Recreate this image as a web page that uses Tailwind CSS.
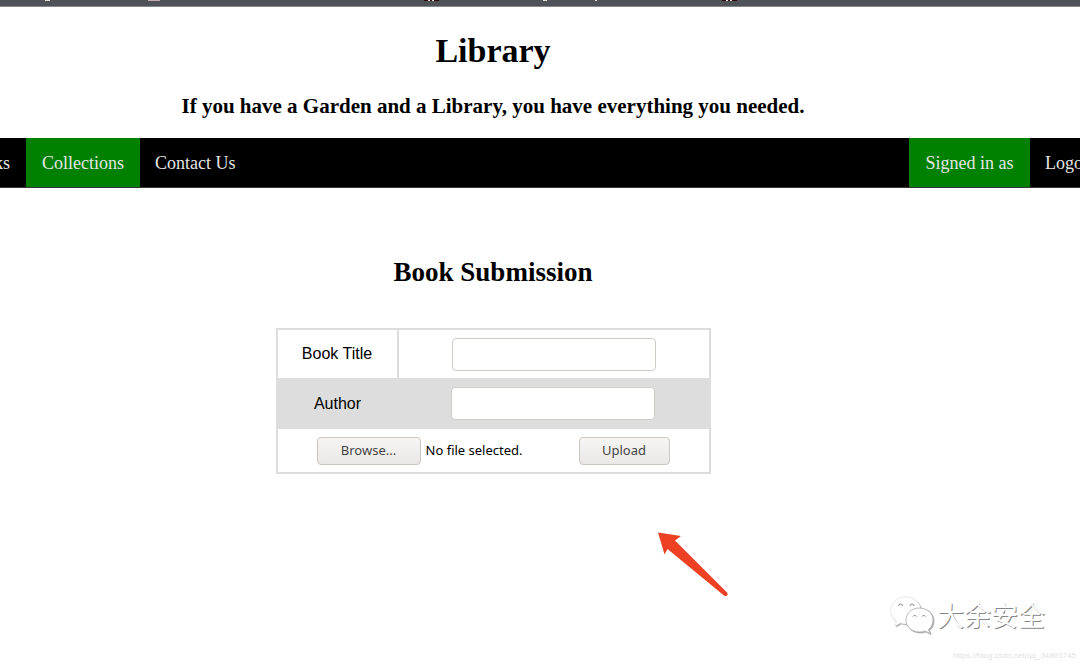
<!DOCTYPE html>
<html lang="en">
<head>
<meta charset="utf-8">
<title>Library</title>
<script src="https://cdn.jsdelivr.net/npm/@tailwindcss/browser@4"></script>
</head>
<body class="relative min-h-screen overflow-x-hidden bg-white font-['Liberation_Serif',serif] text-black">
  <div class="h-[7px] overflow-hidden border-b border-[#85878a] bg-[#4f5357]">
    <svg class="block h-[2px] w-[1080px]" viewBox="0 0 1080 2" aria-hidden="true">
      <path fill="#e3ded6" d="M45 0h5v1h-5zM543 0h4v1h-4zM595 0h2v1h-2z"/>
      <path fill="#c4abb0" d="M148 0h12v1h-12z"/>
      <path fill="#2a0508" d="M424 0h15v1h-15zM722 0h15v1h-15z"/>
      <path fill="#e8dada" d="M428 0h2v1h-2zM432 0h2v1h-2zM726 0h2v1h-2zM730 0h2v1h-2z"/>
    </svg>
  </div>
  <header class="pt-6 pr-[94px] pb-4 text-center font-bold">
    <h1 class="text-[34px] leading-[40px]">Library</h1>
    <h2 class="mt-5 text-[21px] leading-[31px]">If you have a Garden and a Library, you have everything you needed.</h2>
  </header>
  <nav class="flex h-[50px] justify-between overflow-hidden border-b border-[#333] bg-black text-[18px] leading-[51px] whitespace-nowrap text-[#e6e6e6]">
    <div class="flex">
      <a href="#" class="flex w-[26px] justify-end pr-4" aria-label="Books">ks</a>
      <a href="#" class="w-[114px] bg-[#008000] text-center">Collections</a>
      <a href="#" class="px-[15px]">Contact Us</a>
    </div>
    <div class="flex">
      <a href="#" class="w-[121px] bg-[#008000] text-center">Signed in as</a>
      <a href="#" class="w-[50px] overflow-hidden pl-[15px]">Logout</a>
    </div>
  </nav>
  <main class="flex flex-col items-center pt-[66px] pr-[94px]">
    <h2 class="text-[27px] leading-[36px] font-bold">Book Submission</h2>
    <form class="mt-[38px]" onsubmit="return false">
      <table class="w-[435px] table-fixed border-collapse border-2 border-[#ddd] font-['Liberation_Sans',sans-serif] text-base">
        <tr class="h-[49px]">
          <td class="w-[121px] border-r-2 border-[#ddd] text-center"><label for="title">Book Title</label></td>
          <td class="text-center"><input id="title" type="text" class="mx-auto block h-[33px] w-[204px] rounded border border-[#cfccc8] bg-white px-2"></td>
        </tr>
        <tr class="h-[51px] bg-[#ddd]">
          <td class="text-center"><label for="author">Author</label></td>
          <td class="text-center"><input id="author" type="text" class="mx-auto block h-[33px] w-[204px] rounded border border-[#cfccc8] bg-white px-2"></td>
        </tr>
        <tr class="h-[44px] font-['Noto_Sans',sans-serif] text-[13px]">
          <td colspan="2">
            <div class="flex items-center px-[39px]">
              <input id="file" type="file" class="hidden" aria-label="Book file">
              <button type="button" onclick="document.getElementById('file').click()" class="h-7 w-[104px] rounded border border-[#cdc7c2] bg-linear-to-b from-[#f6f5f4] to-[#eae8e6] text-[#444]">Browse...</button>
              <span class="ml-[5px] whitespace-nowrap">No file selected.</span>
              <button type="submit" class="ml-auto h-7 w-[91px] rounded border border-[#cdc7c2] bg-linear-to-b from-[#f6f5f4] to-[#eae8e6] text-[#444]">Upload</button>
            </div>
          </td>
        </tr>
      </table>
    </form>
  </main>
  <svg class="absolute top-[530px] left-[655px] h-[68px] w-[75px]" viewBox="0 0 75 68" aria-hidden="true">
    <path fill="#ee4124" d="M3 2.500 26 6 20 10.500 72 62.500C74 65.500 71 67 69 65.500L12.500 19 9.500 24.500Z"/>
  </svg>
  <div class="absolute top-[594px] left-[888px] flex items-center gap-[3px]">
    <svg class="h-[42px] w-[46px] drop-shadow-[1px_1px_0px_#aaa]" viewBox="0 0 46 42" aria-hidden="true">
      <path fill="#fff" stroke="#ddd" stroke-width=".6" d="M18 3C9 3 2.500 9 2.500 17c0 4.500 2.500 8 6 10.500L7 32l5.500-3c2 .8 4 1 6.500 1C28 30 33 24 33 17S27 3 18 3Z"/>
      <path fill="#fff" stroke="#aaa" stroke-width=".8" d="M31.500 14C24 14 18 19 18 26s6 12 13.500 12c2 0 4-.4 5.500-1l5 2.500-1.500-4c3-2.500 4.500-5.500 4.500-9.500 0-7-6-12-13.500-12Z"/>
      <path fill="none" stroke="#888" d="M10.500 12a2 2 0 0 1 4 0M22 12a2 2 0 0 1 4 0M25 22.500a2 2 0 0 1 3.500 0M34 22.500a2 2 0 0 1 3.500 0"/>
    </svg>
    <p lang="zh" class="font-['Noto_Sans_CJK_SC',sans-serif] text-[27px] leading-10 text-white [text-shadow:1px_1px_0_#888]">大余安全</p>
  </div>
  <p class="absolute right-1 bottom-[2px] font-['Liberation_Sans',sans-serif] text-[8px] leading-3 text-[#e2e2e2]">https://blog.csdn.net/qq_34801745</p>
</body>
</html>
